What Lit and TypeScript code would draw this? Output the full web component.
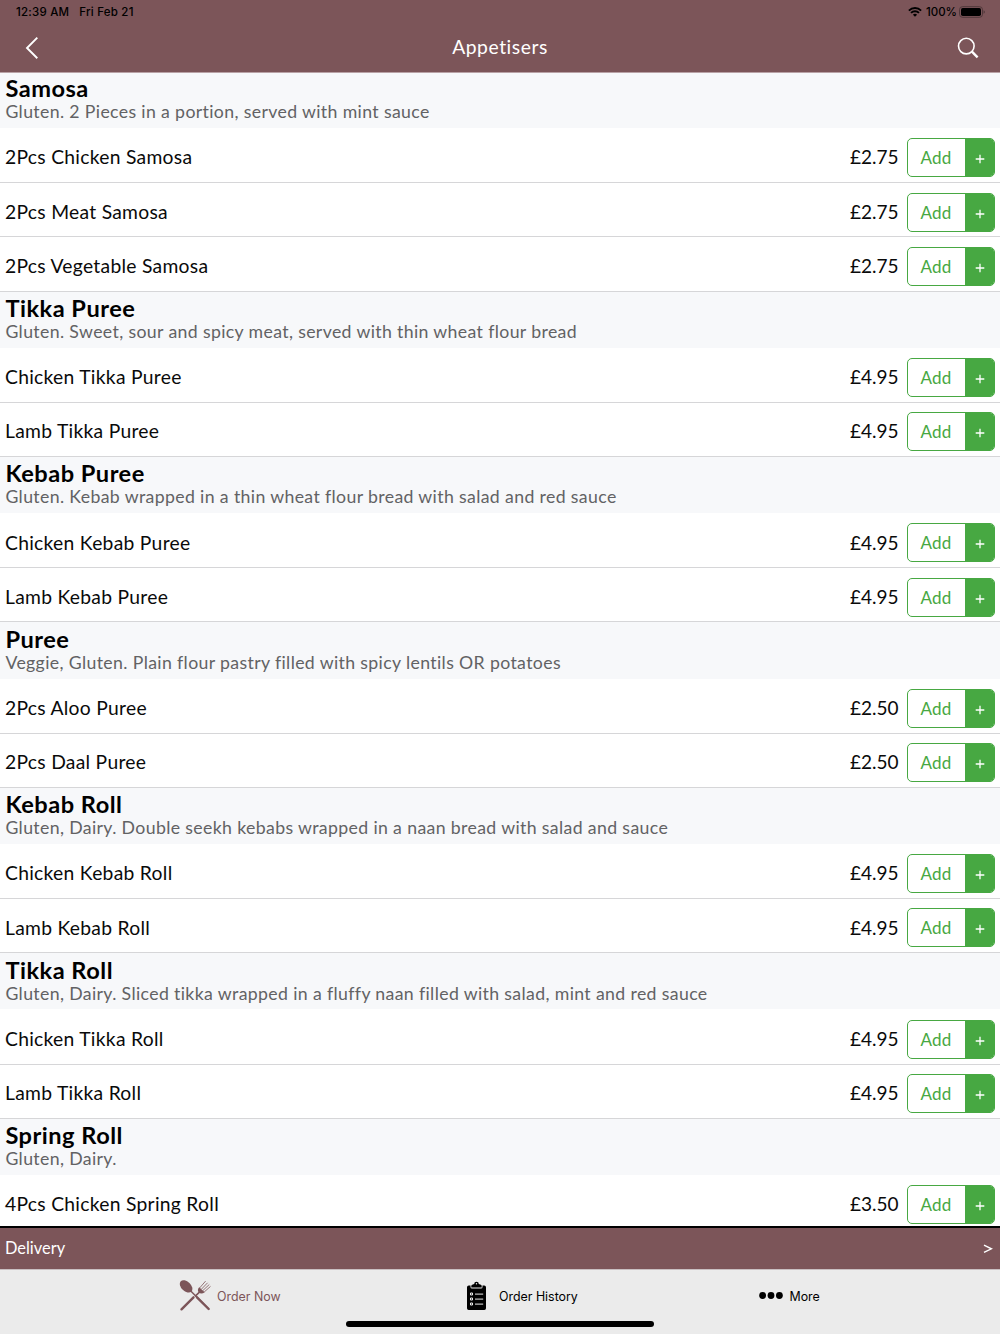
import { LitElement, html, css } from "lit";
import { customElement, property } from "lit/decorators.js";

interface Item { name: string; price: string }
interface Section { title: string; note: string; items: Item[] }

const section = (title: string, note: string, ...items: [string, string][]): Section => ({
  title, note, items: items.map(([name, price]) => ({ name, price })),
});

const MENU: Section[] = [
  section("Samosa", "Gluten. 2 Pieces in a portion, served with mint sauce",
    ["2Pcs Chicken Samosa", "£2.75"], ["2Pcs Meat Samosa", "£2.75"], ["2Pcs Vegetable Samosa", "£2.75"]),
  section("Tikka Puree", "Gluten. Sweet, sour and spicy meat, served with thin wheat flour bread",
    ["Chicken Tikka Puree", "£4.95"], ["Lamb Tikka Puree", "£4.95"]),
  section("Kebab Puree", "Gluten. Kebab wrapped in a thin wheat flour bread with salad and red sauce",
    ["Chicken Kebab Puree", "£4.95"], ["Lamb Kebab Puree", "£4.95"]),
  section("Puree", "Veggie, Gluten. Plain flour pastry filled with spicy lentils OR potatoes",
    ["2Pcs Aloo Puree", "£2.50"], ["2Pcs Daal Puree", "£2.50"]),
  section("Kebab Roll", "Gluten, Dairy. Double seekh kebabs wrapped in a naan bread with salad and sauce",
    ["Chicken Kebab Roll", "£4.95"], ["Lamb Kebab Roll", "£4.95"]),
  section("Tikka Roll", "Gluten, Dairy. Sliced tikka wrapped in a fluffy naan filled with salad, mint and red sauce",
    ["Chicken Tikka Roll", "£4.95"], ["Lamb Tikka Roll", "£4.95"]),
  section("Spring Roll", "Gluten, Dairy.", ["4Pcs Chicken Spring Roll", "£3.50"]),
];

@customElement("menu-row")
class MenuRow extends LitElement {
  @property({ attribute: false }) item!: Item;
  static styles = css`
    :host { display: flex; box-sizing: border-box; height: 54.18px; padding: 0 5.5px 0 5px;
      border-bottom: 1px solid #d6d6d8; background: #fff; align-items: flex-start; }
    .name, .price { line-height: 24px; padding-top: 16.4px; white-space: nowrap; color: #0a0a0a; }
    .name { flex: 1; font-size: 19.3px; letter-spacing: 0.28px; }
    .price { font-size: 19px; margin-right: 8px; }
    .add { display: flex; box-sizing: border-box; width: 88px; height: 39px; margin-top: 9.3px;
      border: 1px solid #47a842; border-radius: 5px; overflow: hidden; padding: 0; background: #fff;
      font: inherit; color: #47a842; }
    .label { flex: 1; font-size: 17px; line-height: 38px; text-align: center; letter-spacing: 0.2px; }
    .plus { width: 29px; height: 38px; background: #47a842; display: flex; justify-content: center; align-items: center; }
    .plus svg { display: block; margin: 2px 0 0 1px; }
  `;
  render() {
    return html`
      <span class="name">${this.item.name}</span>
      <span class="price">${this.item.price}</span>
      <button class="add">
        <span class="label">Add</span>
        <span class="plus"><svg width="10" height="10" viewBox="0 0 10 10"><path d="M5 .7v8.6M.7 5h8.6" stroke="#fff" stroke-width="1.3"/></svg></span>
      </button>`;
  }
}

@customElement("app-root")
class AppRoot extends LitElement {
  static styles = css`
    :host { display: flex; flex-direction: column; height: 1334px; width: 1000px; overflow: hidden;
      font-family: Lato, "Liberation Sans", sans-serif; background: #fff; color: #000; }
    .top { flex: none; height: 72px; background: #7c5559; box-shadow: 0 1px 0 #b9a2a6; position: relative; z-index: 1; }
    .status { display: flex; align-items: center; height: 24px; padding: 0 15px 0 16px;
      font: 500 11.5px/24px Inter, sans-serif; letter-spacing: 0.22px; }
    .date { margin-left: 10px; flex: 1; }
    .full { letter-spacing: 0; margin: 0 2px 0 4px; }
    .nav { display: grid; grid-template-columns: 100px 1fr 100px; align-items: center; height: 48px; padding: 0 20px 0 24px; }
    .title { color: #fff; font-size: 19.3px; line-height: 24px; text-align: center; letter-spacing: 0.55px; padding: 0 4px 2px 0; }
    .search { justify-self: end; }
    svg { display: block; }
    .list { flex: 1; min-height: 0; overflow: hidden; }
    .head { box-sizing: border-box; height: 57.1px; padding: 2.2px 5.4px 0; background: #f7f8fa; border-bottom: 1px solid #fff; white-space: nowrap; }
    .group { font-size: 23.6px; font-weight: 700; line-height: 28px; margin: 0; letter-spacing: 0.5px; }
    .note { font-size: 17.7px; line-height: 20.6px; margin: 0; color: #626264; letter-spacing: 0.36px; }
    .delivery { flex: none; box-sizing: border-box; height: 43.5px; border-top: 2px solid #000; background: #7c5559; color: #fff;
      display: flex; justify-content: space-between; padding: 0 7px 0 5px; font-size: 16.4px; line-height: 40px; }
    .chevron { padding-top: 16px; }
    .tabs { flex: none; box-sizing: border-box; height: 65px; border-top: 1px solid #c9bfc1; background: #ebebeb; position: relative;
      display: grid; grid-template-columns: 179px 287px 292px 1fr; font: 400 12.4px/16px Inter, sans-serif; }
    .tab { display: flex; align-items: center; height: 52px; white-space: nowrap; }
    .tab span { padding-top: 2px; }
    .now { grid-column: 2; color: #7c5559; gap: 6px; }
    .history { grid-column: 3; gap: 12px; }
    .more { grid-column: 4; gap: 6.5px; }
    .home { position: absolute; left: 346px; top: 51px; width: 308px; height: 6px; border-radius: 3px; background: #000; }
  `;
  render() {
    return html`
      <header class="top">
        <div class="status">
          <span>12:39 AM</span><span class="date">Fri Feb 21</span>
          <svg width="14" height="10" viewBox="0 0 14 10" fill="none" stroke="#000" stroke-width="1.9">
            <path d="M.9 3.6a8.6 8.6 0 0 1 12.2 0M3 5.9a5.6 5.6 0 0 1 8 0"/>
            <path d="M7 9.8 4.9 7.7a3 3 0 0 1 4.2 0z" fill="#000" stroke="none"/>
          </svg>
          <span class="full">100%</span>
          <svg width="26" height="12" viewBox="0 0 26 12">
            <rect x=".5" y=".7" width="23" height="10.6" rx="3" fill="none" stroke="#4b3437" stroke-width=".9"/>
            <rect x="2" y="2.1" width="20" height="7.8" rx="1.7"/>
            <path d="M24.6 4.2q1.2.5 1.2 1.8t-1.2 1.8z" fill="#4b3437"/>
          </svg>
        </div>
        <div class="nav">
          <svg width="16" height="24" viewBox="0 0 16 24"><path d="M13.3 1.6 3 12l10.3 10.2" fill="none" stroke="#fff" stroke-width="1.9"/></svg>
          <span class="title">Appetisers</span>
          <svg class="search" width="24" height="24" viewBox="0 0 24 24" fill="none" stroke="#fff">
            <circle cx="10.3" cy="10.1" r="7.8" stroke-width="1.6"/><path d="m15.9 15.7 5.7 5.7" stroke-width="2.4"/>
          </svg>
        </div>
      </header>
      <main class="list">
        ${MENU.map((s) => html`
          <div class="head"><h2 class="group">${s.title}</h2><p class="note">${s.note}</p></div>
          ${s.items.map((i) => html`<menu-row .item=${i}></menu-row>`)}`)}
      </main>
      <div class="delivery"><span>Delivery</span>
        <svg class="chevron" width="10" height="10" viewBox="0 0 10 10"><path d="m1 1.2 7.4 3.6L1 8.4" fill="none" stroke="#fff" stroke-width="1.4"/></svg>
      </div>
      <nav class="tabs">
        <div class="tab now">
          <svg width="32" height="32" viewBox="0 0 32 32" fill="#7c5559" stroke="#7c5559">
            <ellipse cx="7.1" cy="6.4" rx="7.4" ry="4.8" transform="rotate(44 7.1 6.4)" stroke="none"/>
            <path d="M11.500 10.800 17 16.200" stroke-width="1.500"/>
            <path d="M16 15.300 29.700 29M21.500 11.200 16 16.300" stroke-width="1.600"/>
            <path d="m18 17.300 11.700 11.700M14.500 17.300 2.500 29.300" stroke-width="2.400" stroke-linecap="round"/>
            <path d="M20.200 7.300 25.700 12.200c-1.900 1.500-4.300 1.800-5.800.4s-1.200-3.600.3-5.300z" stroke="none"/>
            <path d="m20.700 7.900 5.900-6.800M22.300 9.300l6.300-6.500M23.800 10.600l6.500-6.100M25.200 12l6.300-5.600" stroke-width=".8"/>
          </svg>
          <span>Order Now</span>
        </div>
        <div class="tab history">
          <svg width="21" height="30" viewBox="0 0 21 30">
            <path d="M2.800 4.500H4.500v1.500q0 1.500 1.500 1.500h9q1.500 0 1.500-1.500V4.500h1.700Q20 4.500 20 6.300v21q0 1.700-1.700 1.700H2.700Q1 29 1 27.300v-21Q1 4.500 2.800 4.500z"/>
            <path fill-rule="evenodd" d="M5.300 6.600V5.100q0-1.500 1.500-1.700l1.400-.3a2.300 2.300 0 0 1 4.600 0l1.400.3q1.500.2 1.500 1.700v1.500zM10.500 2.100a.7.7 0 1 0 0 1.400.7.7 0 0 0 0-1.400z"/>
            <g fill="none" stroke="#ebebeb" stroke-width="1"><path d="M4.500 12h2v2h-2zM4.500 17h2v2h-2zM4.500 22h2v2h-2z"/><path d="M9 13.100h8.200M9 18.100h8.200M9 23.100h8.200"/></g>
          </svg>
          <span>Order History</span>
        </div>
        <div class="tab more">
          <svg width="25" height="8" viewBox="0 0 25 8"><circle cx="4.6" cy="3.500" r="3.400"/><circle cx="13" cy="3.500" r="3.400"/><circle cx="21.400" cy="3.500" r="3.400"/></svg>
          <span>More</span>
        </div>
        <div class="home"></div>
      </nav>`;
  }
}
